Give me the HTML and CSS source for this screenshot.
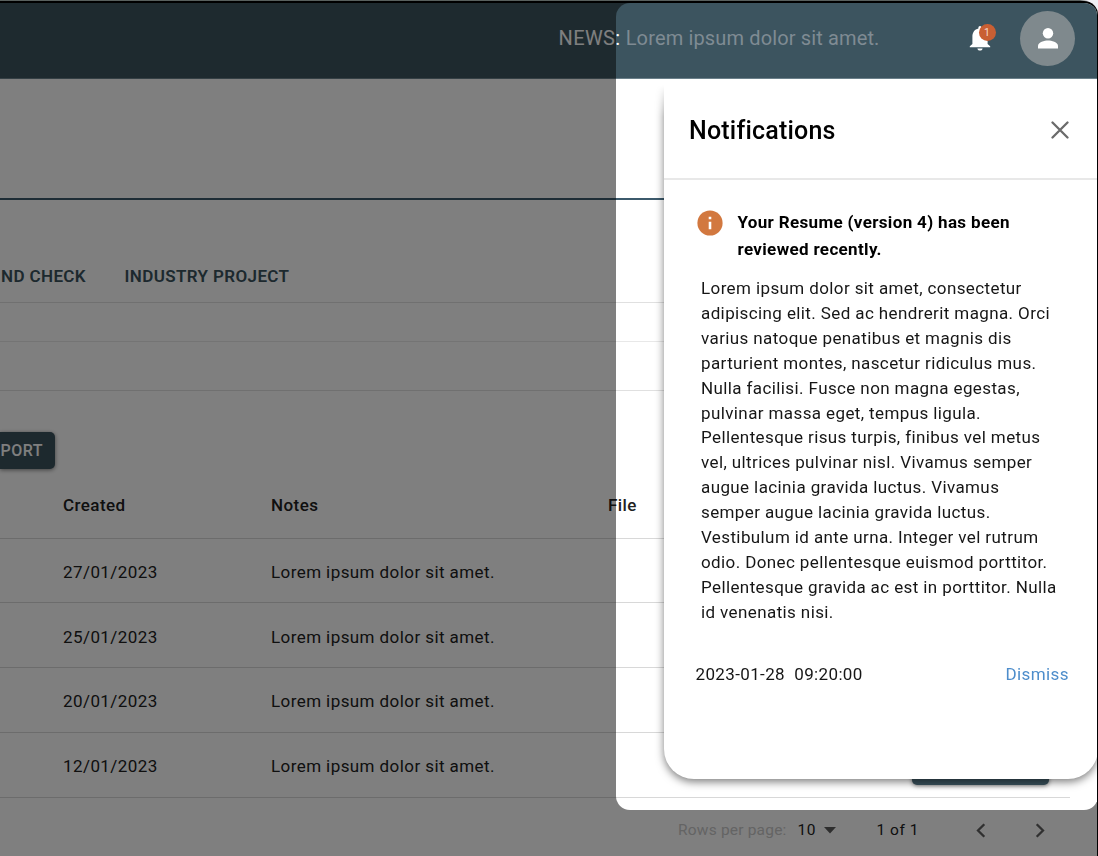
FILE: index.html
```
<!DOCTYPE html>
<html lang="en">
<head>
<meta charset="utf-8">
<title>Notifications</title>
<link rel="stylesheet" href="styles.css">
</head>
<body>
<div class="frame">
  <header class="topbar">
    <p class="news"><span class="news-label">NEWS:</span> Lorem ipsum dolor sit amet.</p>
    <div class="bell">
      <svg width="22" height="27" viewBox="0 0 22 27" fill="#fff"><path d="M11 26.500c1.500 0 2.600-.9 2.600-2.100H8.400c0 1.200 1.100 2.100 2.600 2.100zM18.600 20v-7.500c0-4.200-2.200-7.200-6-8.100V3.500a1.600 1.600 0 0 0-3.200 0v.9c-3.800.9-6 3.900-6 8.100V20L.8 22.200v1.100h20.400v-1.100z"/></svg>
      <span class="badge">1</span>
    </div>
    <div class="avatar">
      <svg width="20" height="21" viewBox="0 0 20 21" fill="#fff"><circle cx="10" cy="5.300" r="5.200"/><path d="M0 20.500v-2.700c0-3.500 6.600-5.200 10-5.200s10 1.700 10 5.200v2.700z"/></svg>
    </div>
  </header>
  <main class="page">
    <div class="heading"></div>
    <nav class="tabs"><span class="tab cut">ND CHECK</span><span class="tab">INDUSTRY PROJECT</span></nav>
    <div class="strip"></div>
    <div class="strip tall"></div>
    <div class="tools"><button class="btn">PORT</button></div>
    <div class="table">
      <div class="row head"><span></span><span>Created</span><span>Notes</span><span>File</span></div>
      <div class="row"><span></span><span>27/01/2023</span><span>Lorem ipsum dolor sit amet.</span></div>
      <div class="row"><span></span><span>25/01/2023</span><span>Lorem ipsum dolor sit amet.</span></div>
      <div class="row"><span></span><span>20/01/2023</span><span>Lorem ipsum dolor sit amet.</span></div>
      <div class="row"><span></span><span>12/01/2023</span><span>Lorem ipsum dolor sit amet.</span><span></span><button class="btn wide" aria-label="Open"></button></div>
    </div>
    <footer class="pager">
      <span class="rows-label">Rows per page:</span>
      <span class="rows-count">10</span>
      <svg class="caret" width="12" height="7" viewBox="0 0 12 7"><path d="M0 0h12L6 6.500z" fill="#5c5c5c"/></svg>
      <span class="range">1 of 1</span>
      <svg class="prev" width="10" height="15" viewBox="0 0 10 15"><path d="M8.300 1.200L2 7.500l6.300 6.300" fill="none" stroke="#606060" stroke-width="2.300"/></svg>
      <svg class="next" width="10" height="15" viewBox="0 0 10 15"><path d="M1.700 1.200L8 7.500l-6.300 6.300" fill="none" stroke="#606060" stroke-width="2.300"/></svg>
    </footer>
  </main>
  <div class="drawer-clip">
    <aside class="drawer">
      <div class="drawer-head">
        <h2>Notifications</h2>
        <svg width="18" height="18" viewBox="0 0 18 18"><path d="M1.500 1.500l15 15M16.500 1.500l-15 15" stroke="#6b6b6b" stroke-width="2.300" stroke-linecap="round"/></svg>
      </div>
      <div class="notice">
        <svg width="26" height="26" viewBox="0 0 26 26"><circle cx="13" cy="13" r="12.600" fill="#d2783f"/><path d="M11.700 6.700h2.600v2.500h-2.600zM11.700 11.700h2.600v7.600h-2.600z" fill="#fff"/></svg>
        <h3>Your Resume (version 4) has been<br>reviewed recently.</h3>
      </div>
      <p class="message">Lorem ipsum dolor sit amet, consectetur<br>adipiscing elit. Sed ac hendrerit magna. Orci<br>varius natoque penatibus et magnis dis<br>parturient montes, nascetur ridiculus mus.<br>Nulla facilisi. Fusce non magna egestas,<br>pulvinar massa eget, tempus ligula.<br>Pellentesque risus turpis, finibus vel metus<br>vel, ultrices pulvinar nisl. Vivamus semper<br>augue lacinia gravida luctus. Vivamus<br>semper augue lacinia gravida luctus.<br>Vestibulum id ante urna. Integer vel rutrum<br>odio. Donec pellentesque euismod porttitor.<br>Pellentesque gravida ac est in porttitor. Nulla<br>id venenatis nisi.</p>
      <div class="drawer-foot"><span class="stamp">2023-01-28&nbsp; 09:20:00</span><a class="dismiss">Dismiss</a></div>
    </aside>
  </div>
  <div class="spotlight"></div>
</div>
</body>
</html>
```
FILE: styles.css
```
* { box-sizing: border-box; }
body {
  margin: 0;
  width: 1098px;
  height: 856px;
  overflow: hidden;
  background: linear-gradient(90deg, #59605e 0 1080px, #f0eff4 1088px);
  font-family: Roboto, "Liberation Sans", sans-serif;
  color: #212121;
  padding-top: 1px;
}
h2, h3, p { margin: 0; }
svg { display: block; flex: none; }
.frame {
  position: relative;
  height: 855px;
  overflow: hidden;
  border-top: 2px solid #000;
  border-right: 1px solid #000;
  border-radius: 0 14px 0 0;
  background: #fff;
}
.topbar {
  height: 76px;
  display: flex;
  align-items: center;
  justify-content: flex-end;
  padding: 0 22px 5px 0;
  background: #3c545f;
  border-bottom: 1px solid #6b808a;
}
.news {
  width: 410.500px;
  font-size: 20px;
  letter-spacing: 0.14px;
  white-space: nowrap;
  color: #7f8b93;
}
.news-label { color: #fff; letter-spacing: 0.4px; }
.bell { position: relative; width: 22px; margin-right: 29px; }
.bell svg { margin-top: -1px; }
.badge {
  position: absolute;
  left: 9.500px;
  top: -1.500px;
  width: 17px;
  height: 17px;
  border-radius: 50%;
  background: #c95f33;
  color: #f3d9cd;
  font-size: 10.500px;
  line-height: 17px;
  text-align: center;
}
.avatar {
  width: 55px;
  height: 55px;
  border-radius: 50%;
  background: #7f898d;
  display: flex;
  align-items: center;
  justify-content: center;
}
.heading { height: 121px; border-bottom: 2px solid #3c5a6c; }
.tabs {
  height: 102.500px;
  display: flex;
  align-items: center;
  gap: 38.500px;
  padding-top: 51px;
  border-bottom: 1px solid #e0e0e0;
  font-size: 17px;
  font-weight: 600;
  color: #3a525d;
}
.tab { white-space: nowrap; letter-spacing: 0.38px; }
.cut { width: 86px; display: flex; justify-content: flex-end; }
.strip { height: 39px; border-bottom: 1px solid #e8e8e8; }
.strip.tall { height: 49px; border-color: #e0e0e0; }
.tools { height: 80px; padding-top: 41px; }
.btn {
  display: block;
  width: 55px;
  height: 37px;
  padding: 0 12px 0 0;
  border: 0;
  border-radius: 0 5px 5px 0;
  background: #3a525d;
  color: #fff;
  font: 500 16px/37px Roboto, "Liberation Sans", sans-serif;
  letter-spacing: 0.5px;
  text-align: right;
  white-space: nowrap;
  box-shadow: 0 1px 4px rgba(0, 0, 0, 0.5);
}
.btn.wide { width: 137px; border-radius: 5px; }
.table { width: 1070px; font-size: 17px; letter-spacing: 0.42px; }
.row {
  height: 64.800px;
  padding-top: 3px;
  display: grid;
  grid-template-columns: 63px 208px 337px 304px 137px;
  align-items: center;
  border-bottom: 1px solid #d8d8d8;
}
.row.head { height: 68px; padding-top: 1px; font-weight: 500; }
.pager {
  display: flex;
  align-items: center;
  height: 65px;
  padding-left: 678px;
  font-size: 15.500px;
  letter-spacing: 0.5px;
  white-space: nowrap;
}
.rows-label { width: 119.500px; color: #c8c8c8; letter-spacing: 0.2px; }
.rows-count { width: 26px; }
.caret { margin-right: 41px; }
.range { width: 99px; }
.prev { margin-right: 49px; }
.drawer-clip {
  position: absolute;
  left: 634px;
  top: 76px;
  width: 464px;
  height: 760px;
  padding-left: 30px;
  overflow: hidden;
  mask-image: linear-gradient(transparent 6px, #000 38px);
}
.drawer {
  width: 434px;
  height: 700px;
  border-radius: 0 0 30px 30px;
  background: #fff;
  box-shadow: 0 3px 9px rgba(0, 0, 0, 0.5);
  color: #161616;
}
.drawer-head {
  height: 101px;
  display: flex;
  align-items: center;
  justify-content: space-between;
  padding: 3px 29px 0 25px;
  border-bottom: 2px solid #e8e8e8;
}
.drawer-head h2 { font-size: 25px; font-weight: 500; letter-spacing: 0.2px; color: #000; }
.notice {
  display: flex;
  align-items: flex-start;
  gap: 14.500px;
  padding: 29px 0 0 33px;
}
.notice svg { margin-top: 1px; }
.notice h3 { font-size: 17px; line-height: 27px; font-weight: 700; letter-spacing: 0.34px; color: #000; white-space: nowrap; }
.message { padding: 13px 0 0 37px; font-size: 17px; line-height: 24.900px; letter-spacing: 0.39px; white-space: nowrap; }
.drawer-foot {
  display: flex;
  justify-content: space-between;
  padding: 39px 29px 0 31.500px;
  font-size: 17px;
  line-height: 20px;
}
.stamp { letter-spacing: 0.37px; }
.dismiss { color: #4d8dcb; letter-spacing: 0.42px; }
.spotlight {
  position: absolute;
  left: 616px;
  top: 0;
  width: 482px;
  height: 806.500px;
  border-radius: 14px;
  box-shadow: 0 0 0 1200px rgba(0, 0, 0, 0.5);
}
```
